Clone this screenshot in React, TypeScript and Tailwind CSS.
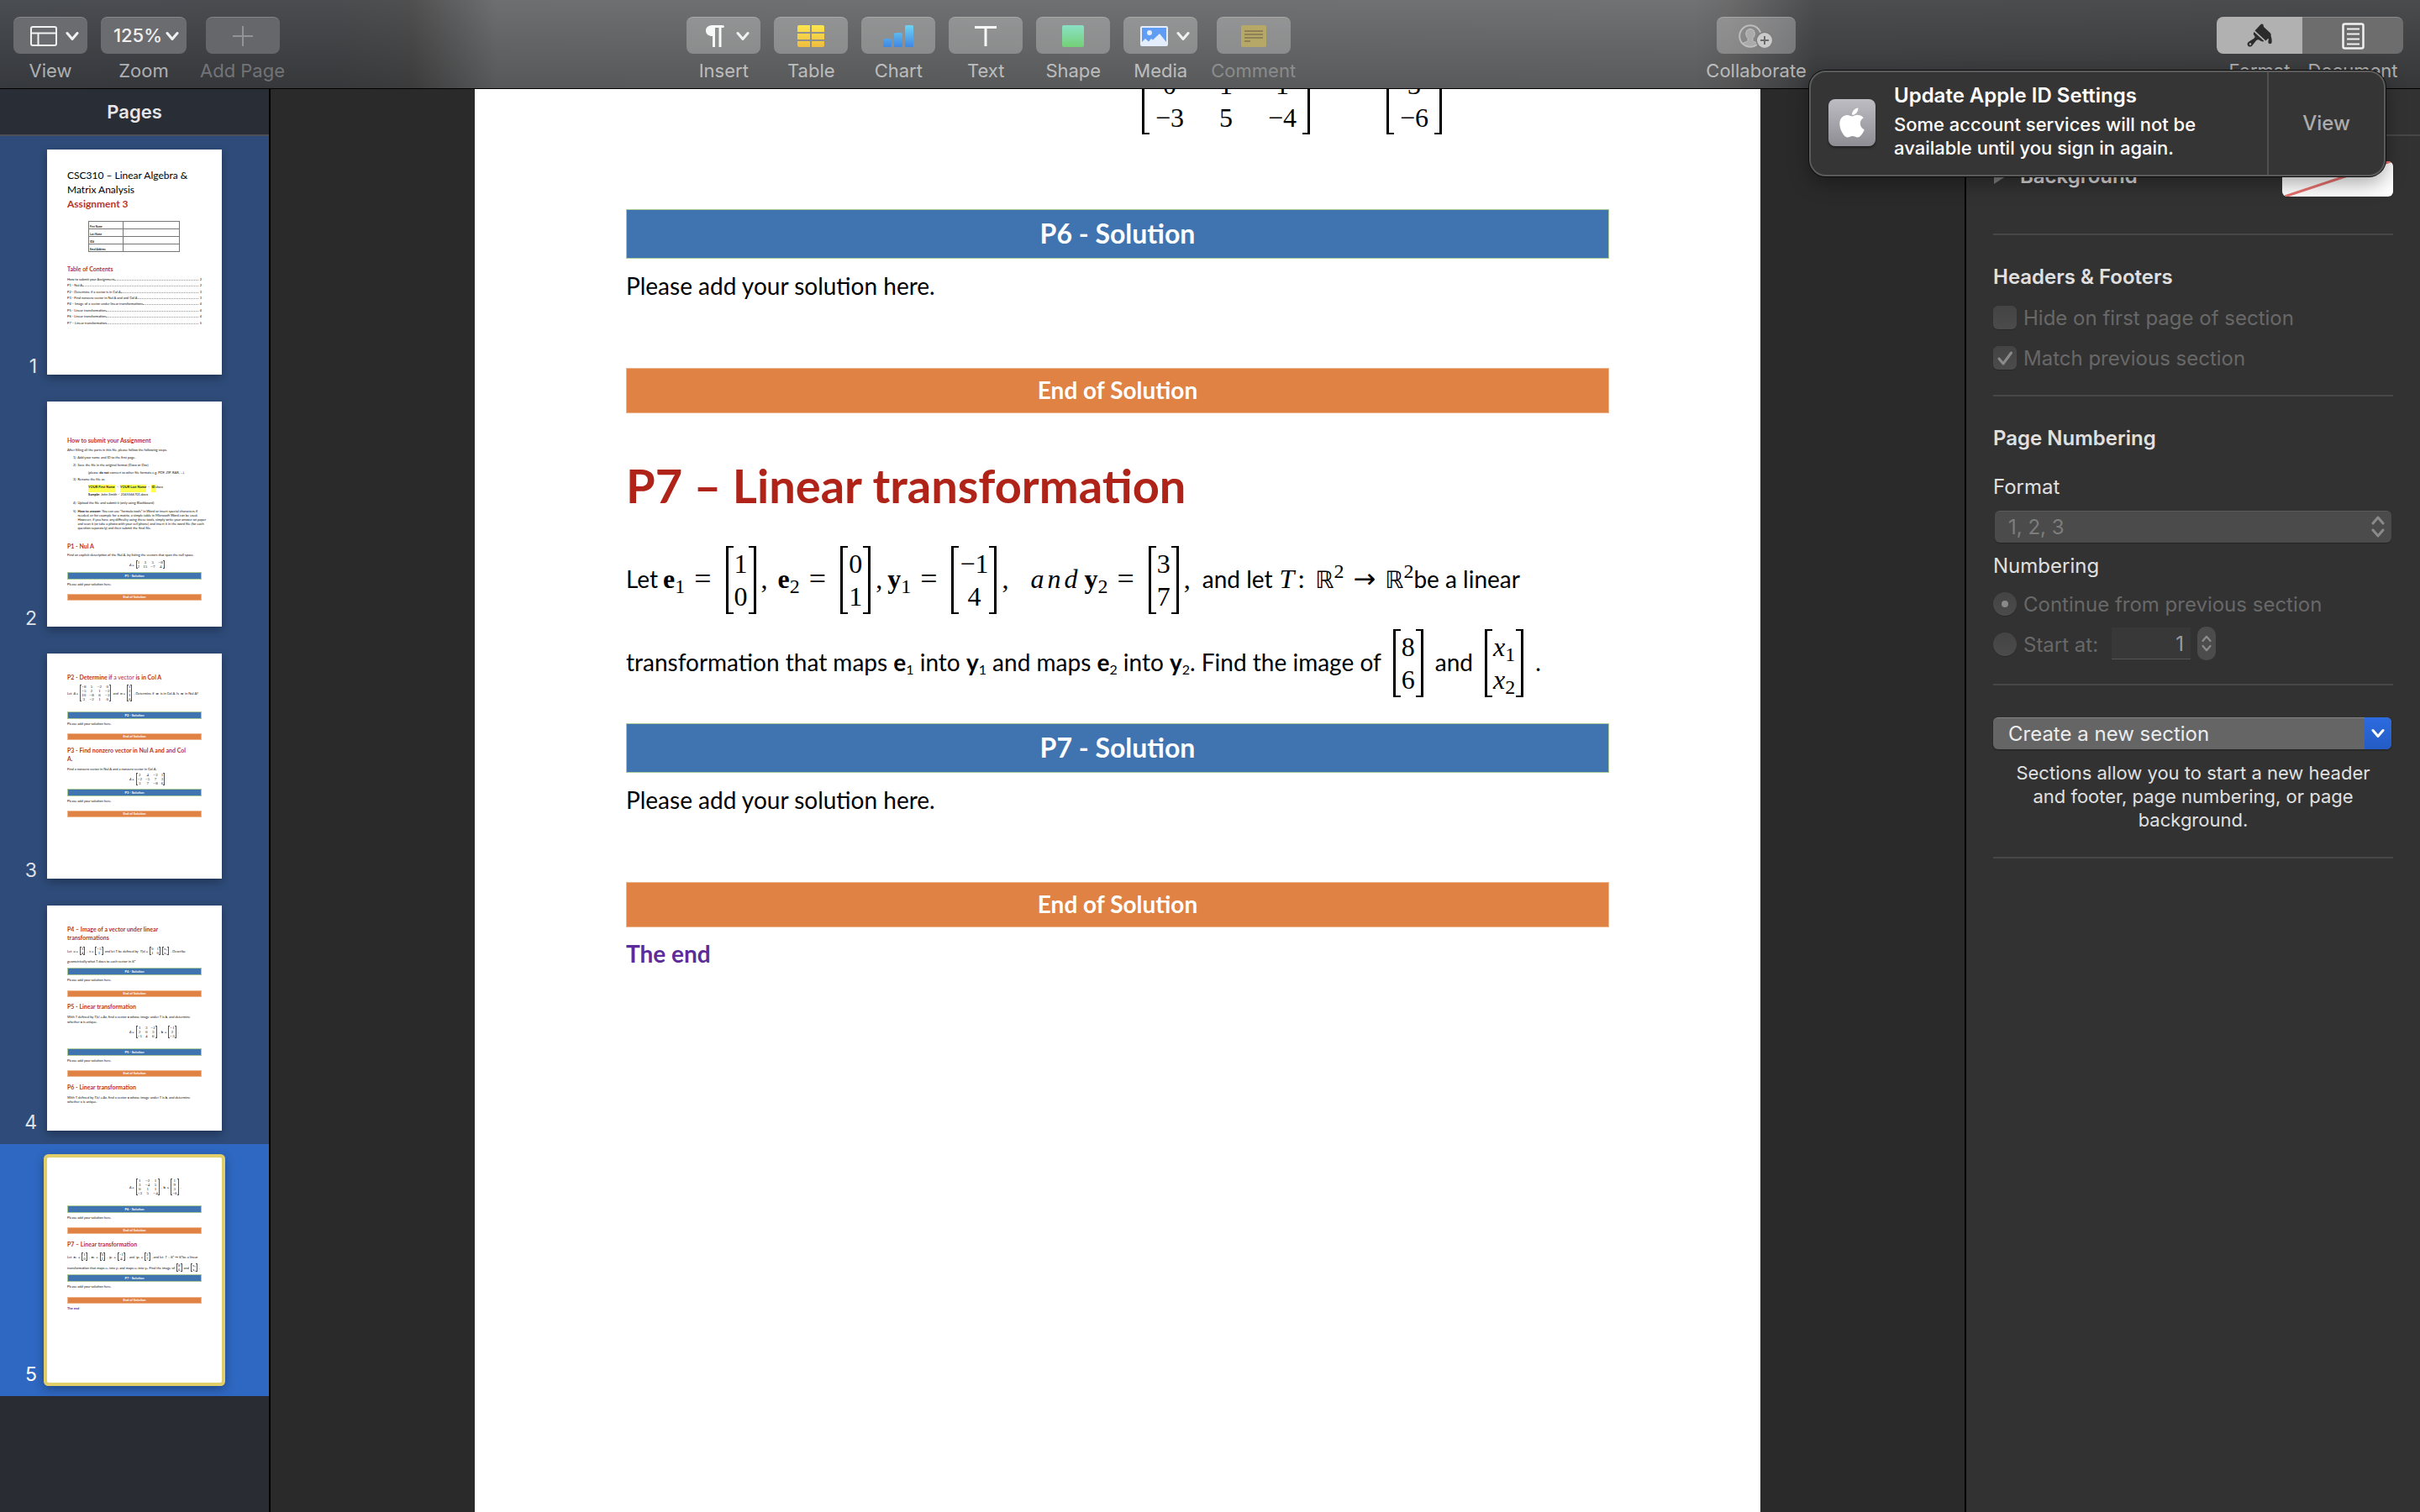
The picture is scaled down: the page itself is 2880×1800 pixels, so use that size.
import React from "react";
import { FaApple } from "react-icons/fa";

const SANS = "font-[Inter,'Liberation_Sans',sans-serif]";
const BODY = "font-[Lato,sans-serif]";
const SERIF = "font-['Liberation_Serif',serif]";

/* ---------- Toolbar icons ---------- */

function Chevron({ className = "" }: { className?: string }) {
  return (
    <svg className={"h-3 w-4 " + className} viewBox="0 0 16 12" fill="none" stroke="currentColor" strokeWidth="3" strokeLinecap="round" strokeLinejoin="round">
      <path d="M2 2.5 8 9.5 14 2.5" />
    </svg>
  );
}

function ViewIcon() {
  return (
    <svg className="h-6 w-8" viewBox="0 0 32 24" fill="none" stroke="#f1f1f1" strokeWidth="2">
      <rect x="1" y="1" width="30" height="22" rx="2" />
      <path d="M1 8.5H31M9.5 8.5V23" />
    </svg>
  );
}

function PlusIcon() {
  return (
    <svg className="size-6" viewBox="0 0 24 24" stroke="#929396" strokeWidth="2">
      <path d="M12 0V24M0 12H24" />
    </svg>
  );
}

function PilcrowIcon() {
  return (
    <svg className="h-[26px] w-[22px]" viewBox="0 0 22 26">
      <path d="M20 0Q22 0 22 1.500T20 3H18.500V26H15.500V3H11V26H8V13C3 13 0 10.500 0 6.500S3 0 8.500 0Z" fill="#f8f8f8" />
    </svg>
  );
}

function TableIcon() {
  return (
    <svg className="h-[26px] w-8" viewBox="0 0 32 26">
      <defs>
        <linearGradient id="tbl" x1="0" y1="0" x2="0" y2="26" gradientUnits="userSpaceOnUse">
          <stop stopColor="#fbe64f" />
          <stop offset="1" stopColor="#efbd3f" />
        </linearGradient>
      </defs>
      <g fill="url(#tbl)">
        <path d="M2 0H15V8H0V2Q0 0 2 0ZM17 0H30Q32 0 32 2V8H17Z" />
        <path d="M0 10H15V17H0ZM17 10H32V17H17Z" />
        <path d="M0 19H15V26H2Q0 26 0 24ZM17 19H32V24Q32 26 30 26H17Z" />
      </g>
    </svg>
  );
}

function ChartIcon() {
  return (
    <svg className="h-[26px] w-9" viewBox="0 0 36 26">
      <defs>
        <linearGradient id="cht" x1="0" y1="0" x2="0" y2="26" gradientUnits="userSpaceOnUse">
          <stop stopColor="#6fd3f2" />
          <stop offset="1" stopColor="#3f87e4" />
        </linearGradient>
      </defs>
      <g fill="url(#cht)">
        <rect x="0" y="16" width="10" height="10" rx="1.500" />
        <rect x="13" y="9" width="10" height="17" rx="1.500" />
        <rect x="26" y="0" width="10" height="26" rx="1.500" />
      </g>
    </svg>
  );
}

function TextIcon() {
  return (
    <svg className="h-6 w-[26px]" viewBox="0 0 26 24" stroke="#f8f8f8" strokeWidth="3">
      <path d="M0 1.500H26M13 1.500V24" />
    </svg>
  );
}

function MediaIcon() {
  return (
    <svg className="h-6 w-[33px]" viewBox="0 0 33 24">
      <rect width="33" height="24" rx="2" fill="#e3edfb" />
      <rect x="2" y="2" width="29" height="17" fill="#5f9cf3" />
      <ellipse cx="11" cy="8" rx="3" ry="3" fill="#e3edfb" />
      <path d="M2 19 6 15l4 3.500 3-3.500 2 1.500L23 9l8 10v3H2Z" fill="#e3edfb" />
    </svg>
  );
}

function CommentIcon() {
  return (
    <svg className="h-[26px] w-[30px]" viewBox="0 0 30 26">
      <rect width="30" height="26" rx="2" fill="#b6a968" />
      <path d="M4 7H26M4 11H26M4 15H26M4 19H11" stroke="#8f8055" strokeWidth="2" />
    </svg>
  );
}

function CollaborateIcon() {
  return (
    <svg className="h-7 w-[42px]" viewBox="0 0 42 28" fill="none">
      <circle cx="14" cy="14" r="12.800" stroke="#bdbdbd" strokeWidth="2" />
      <path d="M14 5.500c-3.300 0-5.200 2.300-5.200 5.500 0 2.400.9 4.300 2.300 5.500v2.700c0 1.500-3.800 1.800-6 3.500A12 12 0 0 0 14 26.500c3.200 0 6.500-1.400 8.900-3.800-2.200-1.700-6-2-6-3.500v-2.700c1.400-1.200 2.300-3.100 2.300-5.500 0-3.200-1.900-5.500-5.200-5.500Z" fill="#aaaaaa" stroke="#c4c4c4" strokeWidth="1" />
      <circle cx="31" cy="19" r="10.500" fill="#7d7d7e" />
      <circle cx="31" cy="19" r="9" fill="#cacaca" />
      <path d="M31 14v10M26 19h10" stroke="#6b6b6c" strokeWidth="2" />
    </svg>
  );
}

function BrushIcon() {
  return (
    <svg className="h-7 w-[30px]" viewBox="0 0 30 28" fill="#2b2b2b">
      <path d="M16 1.500C17 0 19 0 19.500 1.500L20 4l7.500 7c1 1 1.500 2 1 3.500 1 3 1.500 6 1 8.500-.5 1.500-3.500 1.500-4 0-.3-2 .2-3.500.5-5-1 0-2 .8-3.500 2.500L9.500 8.500Z" />
      <path d="M8.500 10 20.500 21c-2 1-4 0-6-1.500-1.500-.8-3 0-4 1.500L6.500 26c-1.500 2-4.500 2-5.500 0-1-1.500-.3-3.500 1.500-4.500L8 18c1.500-1 2-2 1-3.500-1.500-1.500-1.500-3-.5-4.500Z" />
      <circle cx="4" cy="24.500" r="1.200" fill="#b1b1b1" />
    </svg>
  );
}

function DocumentIcon() {
  return (
    <svg className="h-8 w-[27px]" viewBox="0 0 27 32" fill="none" stroke="#f1f1f1">
      <rect x="1.500" y="1.500" width="24" height="29" rx="2" strokeWidth="2.500" />
      <path d="M6 7.500H21M6 13.500H21M6 19.500H21M6 25.500H21" strokeWidth="2" />
    </svg>
  );
}

/* ---------- Toolbar ---------- */

function Tool({ label, children, wide = "w-[88px]", tone = "bg-white/27", dim = false, menu = false }: {
  label: string; children: React.ReactNode; wide?: string; tone?: string; dim?: boolean; menu?: boolean;
}) {
  return (
    <button type="button" className="flex flex-col items-center gap-1.5">
      <span className={"flex h-11 items-center justify-center gap-2.5 rounded-lg border-t border-white/20 text-[#f1f1f1] " + wide + " " + tone + (menu ? " pl-2.5" : "")}>
        {children}
      </span>
      <span className={"text-[22px] leading-7 " + (dim ? "text-white/30" : "text-white/60")}>{label}</span>
    </button>
  );
}

function Toolbar() {
  return (
    <header className="relative flex shrink-0 items-start justify-between border-b border-black bg-[linear-gradient(to_bottom,rgba(255,255,255,0.06),rgba(0,0,0,0.14)),linear-gradient(to_right,#3f4247_0%,#3f4144_14%,#454546_17%,#656667_20.500%,#68696a_70%,#626263_71.500%,#414244_75%,#3f4042_100%)] pt-5 pr-5 pb-[7px] pl-4">
      <div className="flex gap-4">
        <Tool label="View" tone="bg-[#6b6c6f]" menu><ViewIcon /><Chevron /></Tool>
        <Tool label="Zoom" tone="bg-[#6b6c6f]" wide="w-[102px]">
          <span className="flex items-center gap-1 pl-1.5 text-[22px] font-medium">125%<Chevron /></span>
        </Tool>
        <Tool label="Add Page" tone="bg-[#66676a]" dim><PlusIcon /></Tool>
      </div>
      <nav className="mr-2.5 flex gap-4">
        <Tool label="Insert" menu><PilcrowIcon /><Chevron className="ml-1" /></Tool>
        <Tool label="Table"><TableIcon /></Tool>
        <Tool label="Chart"><ChartIcon /></Tool>
        <Tool label="Text"><TextIcon /></Tool>
        <Tool label="Shape">
          <span className="h-[26px] w-[26px] rounded-xs bg-linear-to-b from-[#8ae0c4] to-[#75d076]" />
        </Tool>
        <Tool label="Media" menu><MediaIcon /><Chevron /></Tool>
        <Tool label="Comment" dim><CommentIcon /></Tool>
      </nav>
      <div className="mr-2.5">
        <Tool label="Collaborate" wide="w-[94px]"><CollaborateIcon /></Tool>
      </div>
      <div className="flex">
        <button type="button" className="flex w-[102px] flex-col items-center gap-1.5">
          <span className="flex h-11 w-full items-center justify-center rounded-l-lg bg-[#b1b1b1]"><BrushIcon /></span>
          <span className="text-[22px] leading-7 text-white/60">Format</span>
        </button>
        <button type="button" className="flex w-[120px] flex-col items-center gap-1.5">
          <span className="flex h-11 w-full items-center justify-center rounded-r-lg border-t border-white/20 bg-[#6d6d6e]"><DocumentIcon /></span>
          <span className="text-[22px] leading-7 text-white/60">Document</span>
        </button>
      </div>
    </header>
  );
}

/* ---------- Math ---------- */

function Matrix({ rows }: { rows: React.ReactNode[] }) {
  return (
    <span className="flex pt-1">
      <span className="w-[9px] border-y-2 border-l-3 border-black" />
      <span className="flex h-[81px] flex-col justify-center px-px">
        {rows.map((r, i) => (
          <span key={i} className="text-center leading-[39px]">{r}</span>
        ))}
      </span>
      <span className="w-[9px] border-y-2 border-r-3 border-black" />
    </span>
  );
}

function OpenMatrix({ columns }: { columns: string[][] }) {
  return (
    <span className="flex">
      <span className="w-[9px] border-b-2 border-l-3 border-black" />
      <span className="flex gap-[27px] px-1">
        {columns.map((c, i) => (
          <span key={i} className="flex w-10 flex-col items-center leading-[39px]">
            {c.map((v, j) => <span key={j}>{v}</span>)}
          </span>
        ))}
      </span>
      <span className="w-[9px] border-r-3 border-b-2 border-black" />
    </span>
  );
}

function MathVar({ name, index }: { name: string; index: string }) {
  return <span><b>{name}</b><sub className="text-[24px]">{index}</sub></span>;
}

function Eq() {
  return <span className="mr-[17px] ml-[11px] text-[36px]">=</span>;
}

function RealPlane() {
  return (
    <span className="whitespace-nowrap">
      <span className="font-['DejaVu_Sans',sans-serif] text-[28px]">ℝ</span><sup className="text-[24px]">2</sup>
    </span>
  );
}

/* ---------- Document ---------- */

function SolutionBlock({ title }: { title: string }) {
  return (
    <section>
      <h2 className="flex h-[59px] items-center justify-center border border-[#a9c99a] bg-[#3f74b1] pb-0.5 text-[32px] font-bold text-white">{title}</h2>
      <p className="mt-3.5 leading-9">Please add your solution here.</p>
      <div className="mt-20 flex h-[54px] items-center justify-center border border-[#eeb48c] bg-[#df8244] pb-0.5 font-bold text-white">End of Solution</div>
    </section>
  );
}

function DocumentPage() {
  return (
    <article className={BODY + " w-[1530px] overflow-hidden bg-white px-[180px] text-[28px] text-black"}>
      <div className={SERIF + " -mt-6 flex gap-[91px] pl-[614px] text-[32px]"}>
        <OpenMatrix columns={[["0", "−3"], ["1", "5"], ["1", "−4"]]} />
        <OpenMatrix columns={[["3", "−6"]]} />
      </div>
      <div className="mt-[89px]"><SolutionBlock title="P6 - Solution" /></div>
      <h1 className="mt-[53px] text-[56px] leading-[66px] font-bold text-[#b02318]">P7 – Linear transformation</h1>
      <div className="mt-[35px] flex items-center whitespace-nowrap">
        <span>Let</span>
        <span className={SERIF + " flex items-center text-[32px]"}>
          <span className="ml-1.5"><MathVar name="e" index="1" /></span><Eq />
          <Matrix rows={["1", "0"]} />
          <span className="mx-1.5">,</span>
          <span className="ml-1.5"><MathVar name="e" index="2" /></span><Eq />
          <Matrix rows={["0", "1"]} />
          <span className="mx-1.5">,</span>
          <MathVar name="y" index="1" /><Eq />
          <Matrix rows={["−1", "4"]} />
          <span className="mx-1.5">,</span>
          <span className="ml-5 flex gap-1 italic"><i>a</i><i>n</i><i>d</i></span>
          <span className="ml-2"><MathVar name="y" index="2" /></span><Eq />
          <Matrix rows={["3", "7"]} />
          <span className="mx-1.5">,</span>
        </span>
        <span className="ml-2">and let</span>
        <span className={SERIF + " ml-2 flex items-center text-[32px]"}>
          <i>T</i><span className="mr-3 ml-1">:</span>
          <RealPlane />
          <span className="mx-[11px] font-['DejaVu_Sans',sans-serif] text-[32px] leading-8">→</span>
          <RealPlane />
        </span>
        <span>be a linear</span>
      </div>
      <div className="mt-3.5 flex items-center whitespace-nowrap">
        <span>
          transformation that maps <b>e</b><sub className="text-[16px]">1</sub> into <b>y</b><sub className="text-[16px]">1</sub> and maps <b>e</b><sub className="text-[16px]">2</sub> into <b>y</b><sub className="text-[16px]">2</sub>. Find the image of
        </span>
        <span className={SERIF + " mx-3.5 flex text-[32px]"}><Matrix rows={["8", "6"]} /></span>
        <span>and</span>
        <span className={SERIF + " mx-3.5 flex text-[32px]"}>
          <Matrix rows={[
            <span key="1"><i>x</i><sub className="text-[24px]">1</sub></span>,
            <span key="2"><i>x</i><sub className="text-[24px]">2</sub></span>,
          ]} />
        </span>
        <span>.</span>
      </div>
      <div className="mt-[31px]"><SolutionBlock title="P7 - Solution" /></div>
      <p className="mt-[13px] leading-9 font-bold text-[#5c2d9a]">The end</p>
    </article>
  );
}

/* ---------- Page thumbnails ---------- */

function MiniH({ className = "", children }: { className?: string; children: React.ReactNode }) {
  return <h3 className={"text-[7px] leading-[10px] font-bold text-[#b9332a] " + className}>{children}</h3>;
}

function MiniP({ className = "", children }: { className?: string; children: React.ReactNode }) {
  return <p className={"text-[4px] leading-[5px] whitespace-nowrap " + className}>{children}</p>;
}

function MiniSolution({ title, gap = "mt-[9px]" }: { title: string; gap?: string }) {
  return (
    <div>
      <div className="flex h-[9px] items-center justify-center border border-[#a9c99a] bg-[#3f74b1] text-[4px] font-bold text-white">{title}</div>
      <MiniP className="mt-[3px]">Please add your solution here.</MiniP>
      <div className={"flex h-2 items-center justify-center border border-[#eeb48c] bg-[#df8244] text-[4px] font-bold text-white " + gap}>End of Solution</div>
    </div>
  );
}

function MiniMatrix({ rows }: { rows: string[] }) {
  const columns = rows[0].split(" ").map((_, c) => rows.map((r) => r.split(" ")[c]));
  return (
    <span className={SERIF + " flex text-[5px] leading-[5px]"}>
      <span className="w-0.5 border-y border-l border-[#555]" />
      <span className="flex gap-1">
        {columns.map((c, i) => (
          <span key={i} className="flex flex-col items-center">
            {c.map((v, j) => <span key={j}>{v}</span>)}
          </span>
        ))}
      </span>
      <span className="w-0.5 border-y border-r border-[#555]" />
    </span>
  );
}

function MiniRow({ className = "", children }: { className?: string; children: React.ReactNode }) {
  return <div className={"flex items-center gap-0.5 text-[4px] leading-[5px] whitespace-nowrap " + className}>{children}</div>;
}

const TOC: [string, string, string][] = [
  ["How to submit your Assignment", "2", "mt-[5px]"],
  ["P1 - Nul A", "2", "mt-0.5"],
  ["P2 - Determine if a vector is in Col A", "3", "mt-[3px]"],
  ["P3 - Find nonzero vector in Nul A and and Col A.", "3", "mt-0.5"],
  ["P4 – Image of a vector under linear transformations", "4", "mt-0.5"],
  ["P5 - Linear transformation", "4", "mt-[3px]"],
  ["P6 - Linear transformation", "4", "mt-0.5"],
  ["P7 – Linear transformation", "5", "mt-[3px]"],
];

function Thumb1() {
  return (
    <div className="pt-[22px]">
      <h3 className="text-[12px] leading-[17px] text-black">CSC310 – Linear Algebra &amp; Matrix Analysis</h3>
      <h3 className="text-[12px] leading-[18px] font-bold text-[#b9332a]">Assignment 3</h3>
      <table className="mt-[11px] ml-[25px] w-[109px] border-collapse text-[3px] leading-[3px] font-bold">
        <tbody>
          {["First Name", "Last Name", "ID#", "Email Address"].map((n) => (
            <tr key={n} className="h-[9px]">
              <td className="w-[41px] border border-[#777] pt-1 pl-px">{n}</td>
              <td className="border border-[#777]" />
            </tr>
          ))}
        </tbody>
      </table>
      <MiniH className="mt-[15px]">Table of Contents</MiniH>
      {TOC.map(([t, n, m]) => (
        <MiniP key={t} className={"flex items-end " + m}>
          <span>{t}</span>
          <span className="mb-px flex-1 border-b border-dotted border-[#999]" />
          <span className="pl-0.5">{n}</span>
        </MiniP>
      ))}
    </div>
  );
}

function Thumb2() {
  return (
    <div className="pt-[41px]">
      <MiniH>How to submit your Assignment</MiniH>
      <MiniP className="mt-1">After filling all the parts in this file, please follow the following steps.</MiniP>
      <MiniP className="mt-1 pl-[7px]">1)&nbsp; Add your name and ID to the first page.</MiniP>
      <MiniP className="mt-1 pl-[7px]">2)&nbsp; Save the file in the original format (Docx or Doc)</MiniP>
      <MiniP className="mt-1 pl-[25px]">(please <b>do not</b> convert to other file formats e.g. PDF, ZIP, RAR, …).</MiniP>
      <MiniP className="mt-[3px] pl-[7px]">3)&nbsp; Rename the file as</MiniP>
      <MiniP className="mt-1 flex h-[9px] gap-0.5 pl-[25px]">
        <b className="bg-[#ffff4d]">YOUR First Name</b>–<b className="bg-[#ffff4d]">YOUR Last Name</b>–<span><b className="inline-block h-[9px] bg-[#ffff4d]">ID</b>.docx</span>
      </MiniP>
      <MiniP className="pl-[25px]"><b>Sample:</b> John Smith – 2345566701.docx</MiniP>
      <MiniP className="mt-[5px] pl-[7px]">4)&nbsp; Upload the file and submit it (only using Blackboard)</MiniP>
      <div className="mt-[5px] flex gap-[2px] pl-[7px]">
        <MiniP>5)</MiniP>
        <div>
          <MiniP><b>How to answer:</b> You can use “formula tools” in Word or insert special characters if</MiniP>
          <MiniP>needed, or for example for a matrix, a simple table in Microsoft Word can be used.</MiniP>
          <MiniP>However, if you have any difficulty using these tools, simply write your answer on paper</MiniP>
          <MiniP>and scan it (or take a photo with your cell phone) and insert it in the word file (for each</MiniP>
          <MiniP>question separately) and then submit the final file.</MiniP>
        </div>
      </div>
      <MiniH className="mt-[14px]">P1 - Nul A</MiniH>
      <MiniP className="mt-[3px]">Find an explicit description of the Nul A, by listing the vectors that span the null space.</MiniP>
      <MiniRow className="mt-1 mb-1 pl-[74px]"><i>A =</i><MiniMatrix rows={["1 3 5 −8", "2 15 −7 4"]} /></MiniRow>
      <MiniSolution title="P1 - Solution" />
    </div>
  );
}

function Thumb3() {
  return (
    <div className="pt-[23px]">
      <MiniH>P2 - Determine if <span className="font-normal">a vector</span> is in Col A</MiniH>
      <MiniRow className="mt-1 mb-3">
        Let <i>A =</i><MiniMatrix rows={["−8 5 −2 0", "−5 2 1 −2", "10 −8 6 −3", "3 −2 1 0"]} />and <i>w =</i>
        <MiniMatrix rows={["1", "2", "1", "0"]} />. Determine if <b>w</b> is in Col A. Is <b>w</b> in Nul A?
      </MiniRow>
      <MiniSolution title="P2 - Solution" />
      <MiniH className="mt-[7px]">P3 - Find nonzero vector in Nul A and and Col<br />A.</MiniH>
      <MiniP className="mt-[5px]">Find a nonzero vector in Nul A and a nonzero vector in Col A.</MiniP>
      <MiniRow className="mt-0.5 mb-1 pl-[74px]"><i>A =</i><MiniMatrix rows={["2 4 −2 1", "−2 −5 7 3", "3 7 −8 6"]} /></MiniRow>
      <MiniSolution title="P3 - Solution" />
    </div>
  );
}

function Thumb4() {
  return (
    <div className="pt-[23px]">
      <MiniH>P4 – Image of a vector under linear<br />transformations</MiniH>
      <MiniRow className="mt-1.5">
        Let <i>u =</i><MiniMatrix rows={["3", "4"]} />, <i>v =</i><MiniMatrix rows={["−5", "1"]} />and let T be defined by <i>T(x) =</i>
        <MiniMatrix rows={["0 1", "1 0"]} /><MiniMatrix rows={["x₁", "x₂"]} />. Describe
      </MiniRow>
      <MiniP className="mt-[5px] mb-[5px]">geometrically what T does to each vector in ℝ²</MiniP>
      <MiniSolution title="P4 - Solution" gap="mt-[10px]" />
      <MiniH className="mt-[6px]">P5 - Linear transformation</MiniH>
      <MiniP className="mt-[5px]">With T defined by <i>T(x) = Ax</i>, find a vector <b>x</b> whose image under T is <b>b</b>, and determine</MiniP>
      <MiniP className="mt-px">whether <b>x</b> is unique.</MiniP>
      <MiniRow className="mt-0.5 mb-3 pl-[74px]">
        <i>A =</i><MiniMatrix rows={["1 3 −2", "2 0 3", "−1 4 6"]} />, <b>b</b> =<MiniMatrix rows={["−1", "2", "−3"]} />.
      </MiniRow>
      <MiniSolution title="P5 - Solution" />
      <MiniH className="mt-[7px]">P6 - Linear transformation</MiniH>
      <MiniP className="mt-[5px]">With T defined by <i>T(x) = Ax</i>, find a vector <b>x</b> whose image under T is <b>b</b>, and determine</MiniP>
      <MiniP>whether x is unique.</MiniP>
    </div>
  );
}

function Thumb5() {
  return (
    <div className="pt-[25px]">
      <MiniRow className="mb-3 pl-[74px]">
        <i>A =</i><MiniMatrix rows={["1 −2 1", "3 −4 5", "0 1 1", "−3 5 −4"]} />, <b>b</b> =<MiniMatrix rows={["1", "9", "3", "−6"]} />.
      </MiniRow>
      <MiniSolution title="P6 - Solution" />
      <MiniH className="mt-[7px]">P7 – Linear transformation</MiniH>
      <MiniRow className="mt-[5px]">
        Let <b>e₁</b> =<MiniMatrix rows={["1", "0"]} />, <b>e₂</b> =<MiniMatrix rows={["0", "1"]} />, <b>y₁</b> =<MiniMatrix rows={["−1", "4"]} />, <i>and</i> <b>y₂</b> =
        <MiniMatrix rows={["3", "7"]} />, and let <i>T</i> : ℝ² → ℝ²be a linear
      </MiniRow>
      <MiniRow className="mt-[3px] mb-[3px]">
        transformation that maps e₁ into y₁ and maps e₂ into y₂. Find the image of<MiniMatrix rows={["8", "6"]} />and<MiniMatrix rows={["x₁", "x₂"]} />.
      </MiniRow>
      <MiniSolution title="P7 - Solution" gap="mt-[10px]" />
      <MiniP className="mt-[3px] font-bold text-[#5c2d9a]">The end</MiniP>
    </div>
  );
}

function Sidebar() {
  const thumbs = [Thumb1, Thumb2, Thumb3, Thumb4, Thumb5];
  return (
    <aside className="flex w-[322px] shrink-0 flex-col border-r-2 border-black bg-[#2a2c34]">
      <h2 className="flex h-14 shrink-0 items-center justify-center border-b-2 border-[#4c4f55] bg-[#292d35] text-[22px] font-semibold text-[#e6e6e7]">Pages</h2>
      {thumbs.map((T, i) => (
        <button
          key={i}
          type="button"
          className={"flex h-[300px] shrink-0 items-end gap-3 pb-4 text-left " + (i === 4 ? "bg-[#2f68c2] text-white" : "bg-[#2e4b79] text-[#dde2ea]")}
        >
          <span className="w-11 text-right text-[23px] leading-5">{i + 1}</span>
          <span className={BODY + " block h-[268px] w-[208px] overflow-hidden bg-white px-6 text-[#111] " + (i === 4 ? "rounded-xs shadow-[0_0_0_4px_#e2ce68,0_4px_12px_4px_rgba(0,0,0,0.3)]" : "shadow-[0_4px_10px_rgba(0,0,0,0.3)]")}>
            <T />
          </span>
        </button>
      ))}
    </aside>
  );
}

/* ---------- Inspector ---------- */

function UpDown({ className = "" }: { className?: string }) {
  return (
    <svg className={className} viewBox="0 0 16 26" fill="none" stroke="#8a8a8a" strokeWidth="3" strokeLinecap="round" strokeLinejoin="round">
      <path d="M2 9 8 2l6 7M2 17l6 7 6-7" />
    </svg>
  );
}

function Divider({ className = "" }: { className?: string }) {
  return <hr className={"border-t-2 border-[#474747] " + className} />;
}

const BOX = "size-7 shrink-0 appearance-none bg-linear-to-b from-[#444] to-[#4b4b4b] shadow-[0_1px_1px_rgba(0,0,0,0.2)]";

function Inspector() {
  return (
    <aside className="w-[542px] shrink-0 border-l-2 border-black bg-[#323232] text-[24px] text-[#e0e0e0]">
      <div className="h-14 border-b-2 border-[#474747]" />
      <div className="px-8 pt-[30px]">
        <div className="flex items-center">
          <button type="button" className="flex items-center gap-4 pb-1.5 leading-[30px] font-semibold text-[#d8d8d8]">
            <svg className="h-5 w-4" viewBox="0 0 16 20"><path d="M1 1 15 10 1 19Z" fill="#7d7d7d" /></svg>
            Background
          </button>
          <button type="button" aria-label="Background fill" className="ml-auto h-[42px] w-[132px] overflow-hidden rounded-md bg-white">
            <svg className="size-full" viewBox="0 0 132 42" stroke="#e8716e" strokeWidth="3"><path d="M3 42 129 0" /></svg>
          </button>
        </div>
        <Divider className="mt-11" />
        <h3 className="mt-[35px] leading-[30px] font-semibold">Headers &amp; Footers</h3>
        <label className="mt-[19px] flex items-center gap-2 text-[#686868]">
          <input type="checkbox" disabled className={BOX + " rounded-md"} />
          <span className="pt-0.5 leading-[26px]">Hide on first page of section</span>
        </label>
        <label className="mt-5 flex items-center gap-2 text-[#686868]">
          <span className="relative flex">
            <input type="checkbox" disabled defaultChecked className={BOX + " rounded-md"} />
            <svg className="pointer-events-none absolute inset-0 size-7" viewBox="0 0 28 28" fill="none" stroke="#8a8a8a" strokeWidth="3" strokeLinecap="round" strokeLinejoin="round"><path d="M7 15 12 21 21.500 8" /></svg>
          </span>
          <span className="pt-0.5 leading-[26px]">Match previous section</span>
        </label>
        <Divider className="mt-[30px]" />
        <h3 className="mt-[35px] leading-[30px] font-semibold">Page Numbering</h3>
        <label htmlFor="format" className="mt-7 block leading-[30px]">Format</label>
        <div className="relative mt-[13px] mr-0.5 ml-0.5">
          <select id="format" disabled className="block h-[38px] w-full appearance-none rounded-md border-t border-[#5a5a5a] bg-[#4b4b4b] px-4 text-[#7d7d7d] opacity-100 shadow-[0_1px_1px_rgba(0,0,0,0.3)]">
            <option>1, 2, 3</option>
          </select>
          <UpDown className="pointer-events-none absolute top-1.5 right-2 h-[26px] w-4" />
        </div>
        <h4 className="mt-[13px] leading-[30px]">Numbering</h4>
        <label className="mt-4 flex items-center gap-2 text-[#686868]">
          <span className="relative flex">
            <input type="radio" name="numbering" disabled defaultChecked className={BOX + " rounded-full"} />
            <span className="pointer-events-none absolute inset-0 m-auto size-2 rounded-full bg-[#8a8a8a]" />
          </span>
          <span className="pt-0.5 leading-[26px]">Continue from previous section</span>
        </label>
        <div className="mt-[13px] flex items-center text-[#686868]">
          <label className="flex items-center gap-2 pt-0.5">
            <input type="radio" name="numbering" disabled className={BOX + " rounded-full"} />
            <span className="pt-0.5 leading-[26px]">Start at:</span>
          </label>
          <input aria-label="Start number" type="text" disabled defaultValue="1" className="ml-4 h-[38px] w-[94px] border-b border-[#555] bg-[#383838] pt-0.5 pr-2 text-right text-[#9b9b9b]" />
          <button type="button" disabled aria-label="Step" className="ml-2 flex h-10 w-[22px] items-center justify-center rounded-[10px] bg-[#4c4c4c]">
            <UpDown className="h-6 w-3" />
          </button>
        </div>
        <Divider className="mt-7" />
        <div className="relative mt-[38px] mr-0.5">
          <select aria-label="Create a new section" className="block h-[38px] w-full appearance-none rounded-md border-t border-[#858585] bg-[#656565] px-[18px] text-[#ececec] shadow-[0_1px_2px_rgba(0,0,0,0.4)]">
            <option>Create a new section</option>
          </select>
          <span className="pointer-events-none absolute top-0 right-0 flex h-[38px] w-8 items-center justify-center rounded-r-md bg-linear-to-b from-[#2c6be0] to-[#245cc4] text-white">
            <Chevron />
          </span>
        </div>
        <p className="mt-3.5 px-5 text-center text-[22px] leading-7">
          Sections allow you to start a new header and footer, page numbering, or page background.
        </p>
        <Divider className="mt-[30px]" />
      </div>
    </aside>
  );
}

/* ---------- Notification ---------- */

function Notification() {
  return (
    <div role="alert" className="absolute top-[84px] right-[41px] flex h-[126px] w-[686px] rounded-[20px] border-2 border-[#5b5b5b] bg-[#353535] shadow-[0_0_0_1px_#0c0c0c,0_8px_24px_rgba(0,0,0,0.35)]">
      <div className="flex flex-1 items-start pl-[21px]">
        <span className="mt-8 flex size-14 items-center justify-center rounded-lg bg-linear-to-b from-[#bdbdc3] to-[#8e8d93] text-white shadow-[0_2px_3px_rgba(0,0,0,0.4)]">
          <FaApple className="size-10" />
        </span>
        <div className="mt-3 ml-[22px] text-white">
          <h2 className="text-[24px] leading-[32px] font-semibold">Update Apple ID Settings</h2>
          <p className="mt-1 text-[22px] leading-7 font-medium whitespace-nowrap">Some account services will not be<br />available until you sign in again.</p>
        </div>
      </div>
      <button type="button" className="w-[139px] border-l-2 border-[#505050] text-[24px] font-medium text-[#ababab]">View</button>
    </div>
  );
}

export default function App() {
  return (
    <div className={SANS + " relative flex h-screen flex-col overflow-hidden bg-[#2a2a2a]"}>
      <Toolbar />
      <div className="flex min-h-0 flex-1">
        <Sidebar />
        <main className="flex flex-1 justify-center overflow-hidden">
          <DocumentPage />
        </main>
        <Inspector />
      </div>
      <Notification />
    </div>
  );
}
